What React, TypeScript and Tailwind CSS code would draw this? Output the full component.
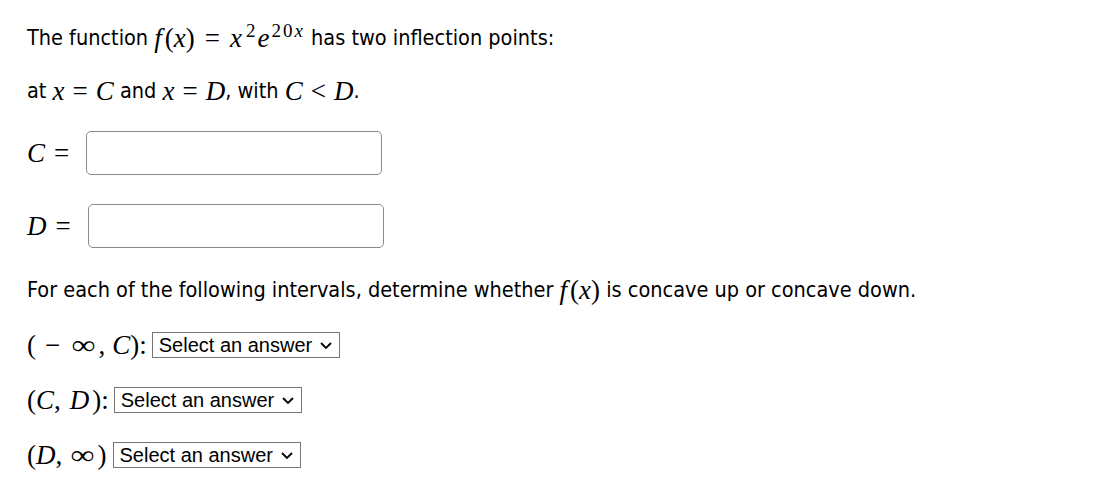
function I({ children }: { children: React.ReactNode }) {
  return <span className="italic">{children}</span>;
}

function M({ children }: { children: React.ReactNode }) {
  return <span className="text-[27px] leading-none whitespace-nowrap font-['Liberation_Serif',serif]">{children}</span>;
}

// relation / operator with math-style spacing
function Op({ children }: { children: React.ReactNode }) {
  return <span className="mx-[8px]">{children}</span>;
}

function Inf() {
  return <span className="inline-block scale-x-125 mx-[3px]">∞</span>;
}

function Select() {
  return (
    <span className="inline-flex items-center h-[26px] w-[188px] border border-[#767676] bg-white pl-[6px] pr-[6px] justify-between text-[20px] leading-none font-['Liberation_Sans',Arial,sans-serif] text-black">
      <span>Select an answer</span>
      <svg width="14" height="14" viewBox="0 0 14 14">
        <path d="M2 5 L7 10 L12 5" fill="none" stroke="#000" strokeWidth="1.8" />
      </svg>
    </span>
  );
}

export default function App() {
  return (
    <div className="w-[1117px] h-[486px] bg-white text-black pl-[27px] pt-[22px] font-['DejaVu_Sans_Condensed','DejaVu_Sans',sans-serif] text-[21.5px]">
      <p className="h-[32px] flex items-center">
        <span>The function&nbsp;</span>
        <M>
          <I>f</I><span className="ml-[3px]">(</span><I>x</I>)<span className="mx-[10px]">=</span><I>x</I>
          <sup className="text-[19px] ml-[4px] mr-[2px]">2</sup>
          <I>e</I>
          <sup className="text-[19px] ml-[2px] tracking-[2px]">20<I>x</I></sup>
        </M>
        <span>&nbsp;has two inflection points:</span>
      </p>
      <p className="h-[32px] mt-[21px] flex items-center">
        at&nbsp;<M><I>x</I><Op>=</Op><I>C</I></M>&nbsp;and&nbsp;<M><I>x</I><Op>=</Op><I>D</I></M>, with&nbsp;
        <M><I>C</I><Op>&lt;</Op><I>D</I></M>.
      </p>
      <div className="mt-[24px] flex items-center gap-[17px]">
        <M><I>C</I><span className="ml-[9px]">=</span></M>
        <div className="w-[296px] h-[44px] border border-[#8a8a8a] rounded-[5px]" />
      </div>
      <div className="mt-[29px] flex items-center gap-[17px]">
        <M><I>D</I><span className="ml-[9px]">=</span></M>
        <div className="w-[296px] h-[44px] border border-[#8a8a8a] rounded-[5px]" />
      </div>
      <p className="mt-[26px] h-[32px] flex items-center">
        For each of the following intervals, determine whether&nbsp;<M><I>f</I><span className="ml-[3px]">(</span><I>x</I>)</M>&nbsp;is concave up or concave down.
      </p>
      <div className="mt-[26px] h-[26px] flex items-center gap-[5px]">
        <M>(<span className="mx-[9px]">−</span><span className="mx-[2px]"><Inf /></span>,<span className="ml-[7px]"><I>C</I></span>):</M>
        <Select />
      </div>
      <div className="mt-[29px] h-[26px] flex items-center gap-[5px]">
        <M>(<I>C</I>,<span className="ml-[9px] mr-[3px]"><I>D</I></span>):</M>
        <Select />
      </div>
      <div className="mt-[29px] h-[26px] flex items-center gap-[6px]">
        <M>(<I>D</I>,<span className="ml-[8px] mr-[2px]"><Inf /></span>)</M>
        <Select />
      </div>
    </div>
  );
}
